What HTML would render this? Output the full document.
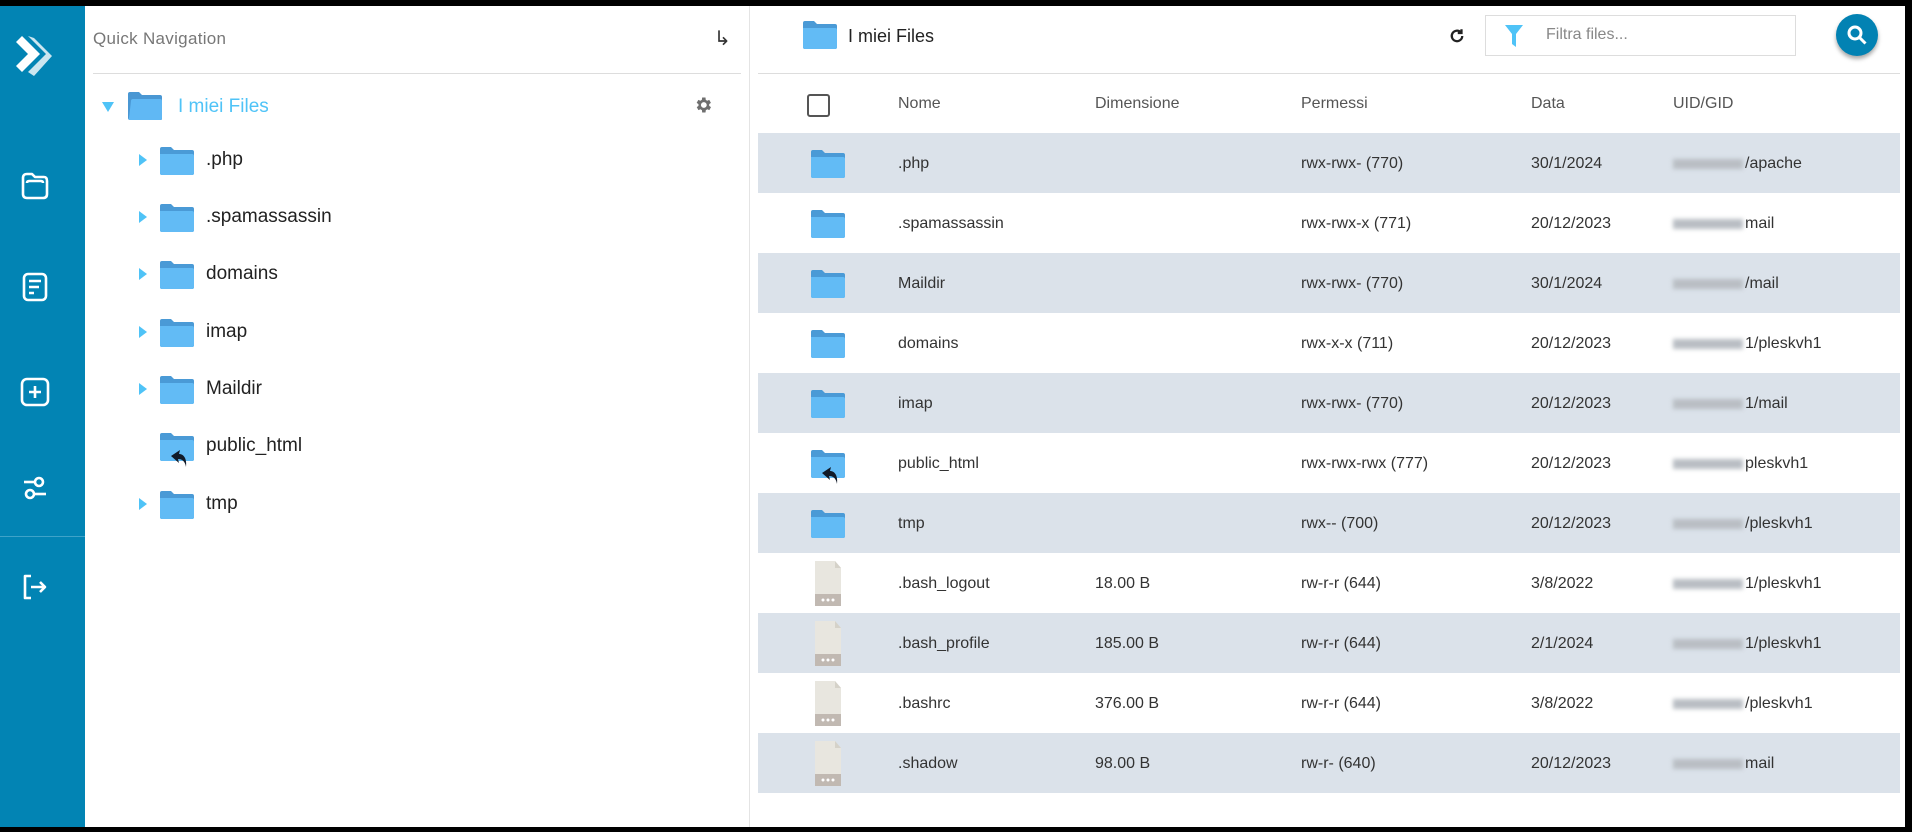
<!DOCTYPE html>
<html><head><meta charset="utf-8"><style>
*{box-sizing:border-box;margin:0;padding:0}
body{width:1912px;height:832px;background:#000;position:relative;overflow:hidden;font-family:"Liberation Sans",sans-serif}
.abs{position:absolute}
#side{left:0;top:6px;width:85px;height:821px;background:#0284b4}
#left{left:85px;top:6px;width:664px;height:821px;background:#fff}
#right{left:749px;top:6px;width:1156px;height:821px;background:#fff;border-left:1px solid #e4e4e4}
.t{position:absolute;white-space:nowrap}
.row{position:absolute;left:8px;width:1142px;height:60px}
.row.g{background:#dbe2ea}
.row .t{top:1px;line-height:60px;font-size:16px;color:#333}
.blur{display:inline-block;width:70px;height:10px;background:#b9bec4;filter:blur(2px);vertical-align:middle;margin-right:2px}
.tri{position:absolute;width:0;height:0;border-top:6px solid transparent;border-bottom:6px solid transparent;border-left:8px solid #4fc3f7}
</style></head><body>
<div id="side" class="abs">
<svg class="abs" style="left:14px;top:28px" width="42" height="44" viewBox="0 0 42 44"><path d="M2 8 L14 20 L2 32 L8 38 L26 20 L8 2 Z" fill="#fff"/><path d="M14 2 L32 20 L14 38 L20 42 L38 22 L20 4 Z" fill="#fff" opacity=".8"/></svg>
<svg class="abs" style="left:20px;top:166px" width="30" height="28" viewBox="0 0 30 28" fill="none" stroke="#fff" stroke-width="2.6" stroke-linejoin="round"><path d="M3 6 Q3 2 7 2 H12 L15 5 H24 Q27 5 27 9 V22 Q27 26 23 26 H7 Q3 26 3 22 Z"/><path d="M7 11 Q7 9 9 9 H21 Q23 9 23 11"/></svg>
<svg class="abs" style="left:21px;top:266px" width="28" height="30" viewBox="0 0 28 30" fill="none" stroke="#fff" stroke-width="2.6"><rect x="3" y="2" width="22" height="26" rx="4"/><path d="M8 9h12M8 15h10M8 21h5"/></svg>
<svg class="abs" style="left:20px;top:371px" width="30" height="30" viewBox="0 0 30 30" fill="none" stroke="#fff" stroke-width="2.6"><rect x="2" y="2" width="26" height="26" rx="5"/><path d="M15 9v12M9 15h12"/></svg>
<svg class="abs" style="left:22px;top:467px" width="26" height="30" viewBox="0 0 26 30" fill="none" stroke="#fff" stroke-width="2.6"><circle cx="17" cy="9" r="4"/><path d="M2 9h11"/><circle cx="8" cy="21" r="4"/><path d="M12 21h12"/></svg>
<div class="abs" style="left:0;top:530px;width:85px;height:1px;background:#3ea3c9"></div>
<svg class="abs" style="left:21px;top:567px" width="28" height="28" viewBox="0 0 28 28" fill="none" stroke="#fff" stroke-width="2.6" stroke-linejoin="round"><path d="M10 3H4v22h6"/><path d="M10 14h14M19 9l5 5-5 5"/></svg>
</div>
<div id="left" class="abs">
<div class="t" style="left:8px;top:23px;font-size:17px;color:#777;letter-spacing:.3px">Quick Navigation</div>
<div class="t" style="left:629px;top:20px;font-size:20px;color:#333">↳</div>
<div class="abs" style="left:8px;top:67px;width:648px;height:1px;background:#ddd"></div>
<div class="abs" style="left:17px;top:96px;width:0;height:0;border-left:6px solid transparent;border-right:6px solid transparent;border-top:10px solid #4fc3f7"></div>
<svg class="abs" style="left:42px;top:85px" width="36" height="30" viewBox="0 0 36 30"><path d="M1 3 Q1 1 3 1 H12 L15 4 H33 Q35 4 35 6 V28 Q35 29 33 29 H3 Q1 29 1 27Z" fill="#4a97d3"/><path d="M4 10 Q4 8 6 8 H33 Q35 8 35 10 V27 Q35 29 33 29 H3 Q1 29 2 27Z" fill="#60b8f4"/></svg>
<div class="t" style="left:93px;top:90px;font-size:19px;color:#4fc3f7">I miei Files</div>
<svg class="abs" style="left:608px;top:89px" width="20" height="20" viewBox="0 0 24 24"><path fill="#6f6f6f" d="M19.4 13a7.5 7.5 0 0 0 0-2l2.1-1.6-2-3.5-2.5 1a7 7 0 0 0-1.7-1L15 3h-4l-.4 2.9a7 7 0 0 0-1.7 1l-2.5-1-2 3.5L6.6 11a7.5 7.5 0 0 0 0 2l-2.1 1.6 2 3.5 2.5-1a7 7 0 0 0 1.7 1L11 21h4l.4-2.9a7 7 0 0 0 1.7-1l2.5 1 2-3.5zM13 15.5a3.5 3.5 0 1 1 0-7 3.5 3.5 0 0 1 0 7z"/></svg>
<div class="tri" style="left:54px;top:148px"></div>
<svg class="abs" style="left:74px;top:140px" width="36" height="30"><use href="#f"/></svg>
<div class="t" style="left:121px;top:143px;font-size:19px;color:#222">.php</div>
<div class="tri" style="left:54px;top:205px"></div>
<svg class="abs" style="left:74px;top:197px" width="36" height="30"><use href="#f"/></svg>
<div class="t" style="left:121px;top:200px;font-size:19px;color:#222">.spamassassin</div>
<div class="tri" style="left:54px;top:262px"></div>
<svg class="abs" style="left:74px;top:254px" width="36" height="30"><use href="#f"/></svg>
<div class="t" style="left:121px;top:257px;font-size:19px;color:#222">domains</div>
<div class="tri" style="left:54px;top:320px"></div>
<svg class="abs" style="left:74px;top:312px" width="36" height="30"><use href="#f"/></svg>
<div class="t" style="left:121px;top:315px;font-size:19px;color:#222">imap</div>
<div class="tri" style="left:54px;top:377px"></div>
<svg class="abs" style="left:74px;top:369px" width="36" height="30"><use href="#f"/></svg>
<div class="t" style="left:121px;top:372px;font-size:19px;color:#222">Maildir</div>
<svg class="abs" style="left:74px;top:426px" width="36" height="36"><use href="#fl"/></svg>
<div class="t" style="left:121px;top:429px;font-size:19px;color:#222">public_html</div>
<div class="tri" style="left:54px;top:492px"></div>
<svg class="abs" style="left:74px;top:484px" width="36" height="30"><use href="#f"/></svg>
<div class="t" style="left:121px;top:487px;font-size:19px;color:#222">tmp</div>
</div>
<svg width="0" height="0" style="position:absolute"><defs>
<g id="f"><path d="M1 3 Q1 1 3 1 H12 L15 4 H33 Q35 4 35 6 V27 Q35 29 33 29 H3 Q1 29 1 27Z" fill="#4a9ad6"/><path d="M1 8 H33 Q35 8 35 10 V27 Q35 29 33 29 H3 Q1 29 1 27Z" fill="#62bbf5"/></g>
<g id="fl"><use href="#f"/><path d="M27 35 C26 29 23 27 19 27 L20 31 L12 24 L21 18 L20 22 C25 22 28 27 27 35 Z" fill="#111a28"/></g>
<g id="doc"><path d="M2 1 H22 L28 8 V46 H2Z" fill="#e8e6df"/><path d="M22 1 L28 8 H22Z" fill="#d5d2c9"/><rect x="2" y="34" width="26" height="12" fill="#c1b9b2"/><circle cx="10" cy="40" r="1.5" fill="#fff"/><circle cx="15" cy="40" r="1.5" fill="#fff"/><circle cx="20" cy="40" r="1.5" fill="#fff"/></g>
</defs></svg>
<div id="right" class="abs">
<svg class="abs" style="left:52px;top:14px" width="36" height="30"><use href="#f"/></svg>
<div class="t" style="left:98px;top:20px;font-size:18px;color:#222">I miei Files</div>
<svg class="abs" style="left:698px;top:21px" width="18" height="18" viewBox="0 0 24 24" fill="none" stroke="#222" stroke-width="3"><path d="M19 12a7 7 0 1 1-2-5"/><path d="M18 3v5h-5" fill="#222"/></svg>
<div class="abs" style="left:735px;top:9px;width:311px;height:41px;border:1px solid #ddd"></div>
<svg class="abs" style="left:755px;top:19px" width="18" height="22" viewBox="0 0 18 22"><path d="M0 0H18L11 9V22L7 19V9Z" fill="#4fc3f7"/></svg>
<div class="t" style="left:796px;top:20px;font-size:16px;color:#888">Filtra files...</div>
<div class="abs" style="left:1086px;top:8px;width:42px;height:42px;border-radius:50%;background:#0282b3;box-shadow:0 3px 4px rgba(0,0,0,.35)"></div>
<svg class="abs" style="left:1096px;top:18px" width="22" height="22" viewBox="0 0 22 22" fill="none" stroke="#fff" stroke-width="3"><circle cx="9" cy="9" r="6"/><path d="M13.5 13.5l6 6"/></svg>
<div class="abs" style="left:8px;top:67px;width:1142px;height:1px;background:#ddd"></div>
<div class="abs" style="left:57px;top:88px;width:23px;height:23px;border:2px solid #555;border-radius:3px"></div>
<div class="t" style="left:148px;top:89px;font-size:16px;color:#555">Nome</div>
<div class="t" style="left:345px;top:89px;font-size:16px;color:#555">Dimensione</div>
<div class="t" style="left:551px;top:89px;font-size:16px;color:#555">Permessi</div>
<div class="t" style="left:781px;top:89px;font-size:16px;color:#555">Data</div>
<div class="t" style="left:923px;top:89px;font-size:16px;color:#555">UID/GID</div>

<div class="row g" style="top:127px"><svg class="abs" style="left:52px;top:16px" width="36" height="30"><use href="#f"/></svg><div class="t" style="left:140px">.php</div><div class="t" style="left:543px">rwx-rwx- (770)</div><div class="t" style="left:773px">30/1/2024</div><div class="t" style="left:915px"><span class="blur"></span>/apache</div></div>
<div class="row" style="top:187px"><svg class="abs" style="left:52px;top:16px" width="36" height="30"><use href="#f"/></svg><div class="t" style="left:140px">.spamassassin</div><div class="t" style="left:543px">rwx-rwx-x (771)</div><div class="t" style="left:773px">20/12/2023</div><div class="t" style="left:915px"><span class="blur"></span>mail</div></div>
<div class="row g" style="top:247px"><svg class="abs" style="left:52px;top:16px" width="36" height="30"><use href="#f"/></svg><div class="t" style="left:140px">Maildir</div><div class="t" style="left:543px">rwx-rwx- (770)</div><div class="t" style="left:773px">30/1/2024</div><div class="t" style="left:915px"><span class="blur"></span>/mail</div></div>
<div class="row" style="top:307px"><svg class="abs" style="left:52px;top:16px" width="36" height="30"><use href="#f"/></svg><div class="t" style="left:140px">domains</div><div class="t" style="left:543px">rwx-x-x (711)</div><div class="t" style="left:773px">20/12/2023</div><div class="t" style="left:915px"><span class="blur"></span>1/pleskvh1</div></div>
<div class="row g" style="top:367px"><svg class="abs" style="left:52px;top:16px" width="36" height="30"><use href="#f"/></svg><div class="t" style="left:140px">imap</div><div class="t" style="left:543px">rwx-rwx- (770)</div><div class="t" style="left:773px">20/12/2023</div><div class="t" style="left:915px"><span class="blur"></span>1/mail</div></div>
<div class="row" style="top:427px"><svg class="abs" style="left:52px;top:16px" width="36" height="36"><use href="#fl"/></svg><div class="t" style="left:140px">public_html</div><div class="t" style="left:543px">rwx-rwx-rwx (777)</div><div class="t" style="left:773px">20/12/2023</div><div class="t" style="left:915px"><span class="blur"></span>pleskvh1</div></div>
<div class="row g" style="top:487px"><svg class="abs" style="left:52px;top:16px" width="36" height="30"><use href="#f"/></svg><div class="t" style="left:140px">tmp</div><div class="t" style="left:543px">rwx-- (700)</div><div class="t" style="left:773px">20/12/2023</div><div class="t" style="left:915px"><span class="blur"></span>/pleskvh1</div></div>
<div class="row" style="top:547px"><svg class="abs" style="left:55px;top:7px" width="30" height="47"><use href="#doc"/></svg><div class="t" style="left:140px">.bash_logout</div><div class="t" style="left:337px">18.00 B</div><div class="t" style="left:543px">rw-r-r (644)</div><div class="t" style="left:773px">3/8/2022</div><div class="t" style="left:915px"><span class="blur"></span>1/pleskvh1</div></div>
<div class="row g" style="top:607px"><svg class="abs" style="left:55px;top:7px" width="30" height="47"><use href="#doc"/></svg><div class="t" style="left:140px">.bash_profile</div><div class="t" style="left:337px">185.00 B</div><div class="t" style="left:543px">rw-r-r (644)</div><div class="t" style="left:773px">2/1/2024</div><div class="t" style="left:915px"><span class="blur"></span>1/pleskvh1</div></div>
<div class="row" style="top:667px"><svg class="abs" style="left:55px;top:7px" width="30" height="47"><use href="#doc"/></svg><div class="t" style="left:140px">.bashrc</div><div class="t" style="left:337px">376.00 B</div><div class="t" style="left:543px">rw-r-r (644)</div><div class="t" style="left:773px">3/8/2022</div><div class="t" style="left:915px"><span class="blur"></span>/pleskvh1</div></div>
<div class="row g" style="top:727px"><svg class="abs" style="left:55px;top:7px" width="30" height="47"><use href="#doc"/></svg><div class="t" style="left:140px">.shadow</div><div class="t" style="left:337px">98.00 B</div><div class="t" style="left:543px">rw-r- (640)</div><div class="t" style="left:773px">20/12/2023</div><div class="t" style="left:915px"><span class="blur"></span>mail</div></div>
</div>
</body></html>
